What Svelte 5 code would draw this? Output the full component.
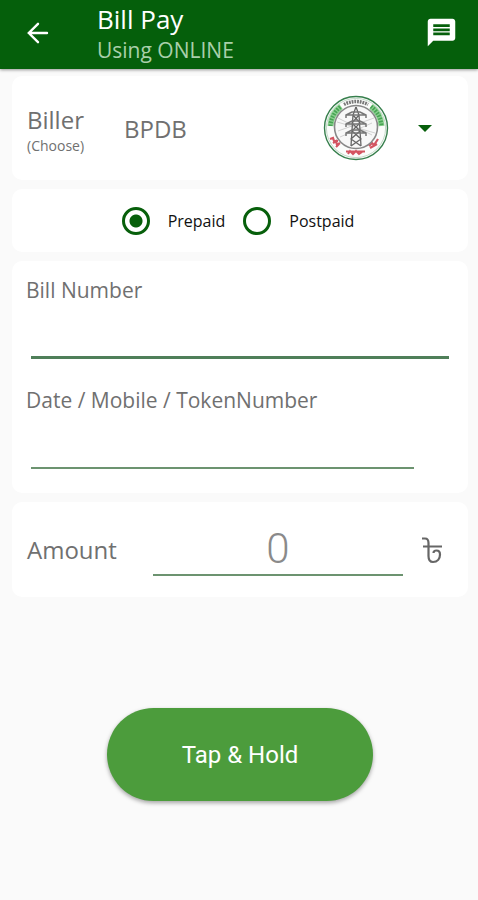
<script>
  let biller = $state('BPDB');
  let plan = $state('prepaid');
  let billNumber = $state('');
  let token = $state('');
  let amount = $state('');
  const towerArms = [16, 25, 34];
</script>

<div class="screen">
  <header>
    <button class="icon back" aria-label="Back">
      <svg viewBox="0 0 24 24" width="24" height="24" fill="none" stroke="#fff" stroke-width="2.4" stroke-linecap="round">
        <path d="M21 12H3M12 2.8L2.8 12L12 21.2" />
      </svg>
    </button>
    <div class="titles">
      <h1>Bill Pay</h1>
      <p>Using ONLINE</p>
    </div>
    <button class="icon" aria-label="Messages">
      <svg viewBox="0 0 24 24" width="33" height="33" fill="#fff">
        <path d="M20 2H4c-1.1 0-2 .9-2 2v18l4-4h14c1.1 0 2-.9 2-2V4c0-1.1-.9-2-2-2zM6 6h12v2H6zM6 9h12v2H6zM6 12h12v2H6z" fill-rule="evenodd" />
      </svg>
    </button>
  </header>

  <main>
    <section class="card biller">
      <label for="biller">Biller<small>(Choose)</small></label>
      <div class="picker">
        <select id="biller" bind:value={biller}>
          <option>BPDB</option>
        </select>
        <svg class="logo" viewBox="0 0 66 66" width="66" height="66" fill="none" aria-hidden="true">
          <circle cx="33" cy="33" r="31.5" fill="#fbfcfb" stroke="#367f4c" stroke-width="1.4" />
          <circle cx="33" cy="33" r="29.6" stroke="#a9c9b0" stroke-width=".7" />
          <path d="M7.5 31A26 26 0 0 1 18 11.500" stroke="#8bcf90" stroke-width="6" />
          <path d="M48 11.500A26 26 0 0 1 58.500 31" stroke="#8bcf90" stroke-width="6" />
          <path d="M7.5 31A26 26 0 0 1 18 11.500M48 11.500A26 26 0 0 1 58.500 31" stroke="#47a453" stroke-width="4" stroke-dasharray="1.600 1.300" />
          <path d="M21 9.500A26 26 0 0 1 45 9.500" stroke="#777" stroke-width="3.500" stroke-dasharray="1.800 .9" />
          <path d="M7 44l3-1 1 3 4 0M10 48l3-2 1 4 3-2M13 52l3-3" stroke="#d45461" stroke-width="2.200" />
          <path d="M23 56.500h19M25 59l2-3 3 3 3-3 3 3 3-2" stroke="#d45461" stroke-width="2" />
          <path d="M46 51l3-3 2 2 4-6M47 53l7-4" stroke="#d45461" stroke-width="2.200" />
          <circle cx="33" cy="32" r="21.500" fill="#f8f8f8" stroke="#888" stroke-width="1.600" />
          <path d="M14 27l38 11M15 36l36-13M17 42l32-14M15 23l34 17" stroke="#c0c0c0" stroke-width=".7" />
          <path d="M33 12L30 20L28 51M33 12L36 20L38 51M30 20l7 8-8 8 9 8-10 7M36 20l-7 8 8 8-9 8 10 7" stroke="#666" stroke-width="1.300" />
          {#each towerArms as y}
            <path d={`M23 ${y + 7}v-3l6-3h8l6 3v3M24 ${y + 4}h18`} stroke="#777" stroke-width="1.500" />
          {/each}
        </svg>
        <svg class="caret" viewBox="0 0 14 8" width="14" height="8" aria-hidden="true"><path d="M0 0h14L7 7z" fill="#075f0b" /></svg>
      </div>
    </section>

    <section class="card plans" role="radiogroup" aria-label="Payment plan">
      <label><input type="radio" name="plan" value="prepaid" bind:group={plan} />Prepaid</label>
      <label><input type="radio" name="plan" value="postpaid" bind:group={plan} />Postpaid</label>
    </section>

    <section class="card details">
      <label for="bill">Bill Number</label>
      <input id="bill" class="line strong" type="text" bind:value={billNumber} />
      <label for="token">Date / Mobile / TokenNumber</label>
      <input id="token" class="line short" type="text" bind:value={token} />
    </section>

    <section class="card amount">
      <label for="amount">Amount</label>
      <input id="amount" class="line" type="text" inputmode="decimal" placeholder="0" bind:value={amount} />
      <svg viewBox="0 0 22 28" width="22" height="28" fill="none" stroke="#666" stroke-width="2.200" role="img" aria-label="Taka">
        <path d="M1 2.500H4C6.500 2.500 7.500 4 7.500 7V20C7.500 24 9 26 12 26C16.500 26 19 22.500 19 18.500C19 15.500 17.500 14.500 15.500 14.500C13.500 14.500 12.500 15.500 12.500 17M2 10.500H21" />
      </svg>
    </section>

    <button class="submit">Tap &amp; Hold</button>
  </main>
</div>

<style>
  :global(body) {
    margin: 0;
    background: #fafafa;
  }
  .screen {
    min-height: 100vh;
    background: #fafafa;
    color: #707070;
    font-family: "Open Sans", "Noto Sans", sans-serif;
  }
  button, input, select {
    font-family: inherit;
    margin: 0;
    padding: 0;
    border: 0;
    background: none;
  }
  header {
    display: flex;
    align-items: center;
    height: 69px;
    padding: 0 20px 0 26px;
    box-sizing: border-box;
    background: #055f0b;
    box-shadow: 0 1px 3px rgba(0, 0, 0, 0.4);
  }
  .icon {
    display: flex;
    align-items: center;
    height: 64px;
    padding-bottom: 4px;
    box-sizing: border-box;
  }
  .titles {
    flex: 1;
    padding-left: 47px;
    padding-bottom: 2px;
  }
  h1, p {
    margin: 0;
    font-weight: 400;
  }
  h1 {
    color: #fff;
    font-size: 26px;
    line-height: 32px;
  }
  p {
    color: #a9cfaa;
    font-size: 21px;
    line-height: 30px;
  }
  main {
    display: flex;
    flex-direction: column;
    gap: 9px;
    padding: 7px 10px 0 12px;
  }
  .card {
    background: #fff;
    border-radius: 10px;
    box-sizing: border-box;
  }
  .biller {
    display: flex;
    align-items: center;
    height: 104px;
    padding: 0 15px;
  }
  .biller label {
    width: 97px;
    padding-top: 4px;
    font-size: 24px;
    line-height: 32px;
  }
  small {
    display: block;
    font-size: 14px;
    line-height: 20px;
  }
  .picker {
    position: relative;
    flex: 1;
    display: flex;
  }
  select {
    appearance: none;
    width: 100%;
    height: 66px;
    color: #707070;
    font-size: 24px;
  }
  .logo {
    position: absolute;
    top: 0;
    right: 64px;
    pointer-events: none;
  }
  .caret {
    position: absolute;
    top: 30px;
    right: 21px;
    pointer-events: none;
  }
  .plans {
    display: flex;
    justify-content: center;
    gap: 18px;
    height: 63px;
    padding-right: 4px;
  }
  .plans label {
    display: flex;
    align-items: center;
    gap: 18px;
    color: #111;
    font-size: 16px;
  }
  .plans input {
    appearance: none;
    width: 28px;
    height: 28px;
    box-sizing: border-box;
    border: 3px solid #075f0b;
    border-radius: 50%;
  }
  .plans input:checked {
    background: radial-gradient(circle, #075f0b 6px, transparent 7px);
  }
  .details {
    display: flex;
    flex-direction: column;
    padding: 14px 14px 24px;
    font-size: 21px;
    line-height: 30px;
  }
  .line {
    min-width: 0;
    box-sizing: border-box;
    border-bottom: 2px solid #6c9370;
    color: #707070;
    font-size: 21px;
    outline: none;
  }
  .details .line {
    height: 54px;
    margin: 0 5px;
  }
  .details .strong {
    border-bottom: 3px solid #4f7f59;
    margin-bottom: 26px;
  }
  .details .short {
    margin-right: 40px;
  }
  .amount {
    display: flex;
    align-items: center;
    height: 95px;
    padding: 0 25px 0 15px;
  }
  .amount label {
    width: 126px;
    font-size: 24px;
  }
  .amount .line {
    flex: 1;
    height: 52px;
    margin-right: 18px;
    font-family: Roboto, sans-serif;
    font-size: 42px;
    font-weight: 300;
    text-align: center;
  }
  .amount .line::placeholder {
    color: #8a8a8a;
    opacity: 1;
  }
  .submit {
    align-self: center;
    width: 266px;
    height: 93px;
    margin-top: 102px;
    border-radius: 47px;
    background: #4c9c3c;
    box-shadow: 0 2px 4px rgba(0, 0, 0, 0.35);
    color: #fff;
    font-family: Roboto, sans-serif;
    font-size: 24px;
  }
</style>
